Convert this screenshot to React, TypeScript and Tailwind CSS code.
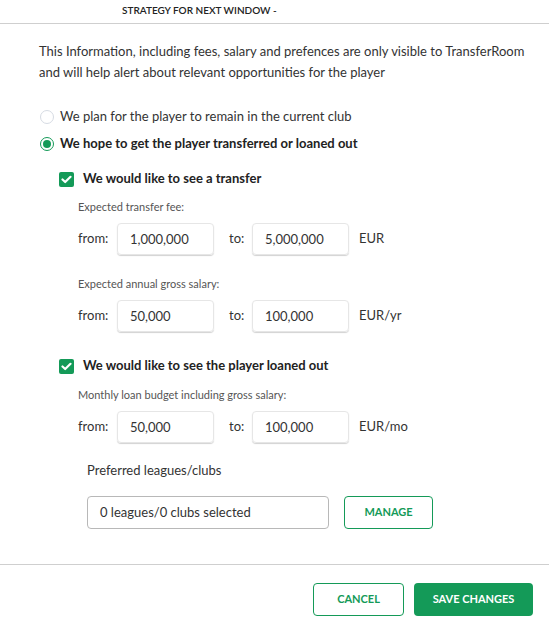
import React, { useState } from 'react';

const GREEN = '#149a58';

const Checkbox: React.FC<{ checked: boolean; onChange: () => void }> = ({ checked, onChange }) => (
    <button
        onClick={onChange}
        className={`w-[15px] h-[15px] rounded-[2px] flex items-center justify-center ${checked ? 'bg-[#149a58]' : 'border border-gray-300 bg-white'}`}
    >
        {checked && (
            <svg width="11" height="9" viewBox="0 0 11 9">
                <path d="M1.5 4.5 L4.2 7 L9.5 1.8" stroke="white" strokeWidth="2.2" fill="none" strokeLinecap="round" strokeLinejoin="round" />
            </svg>
        )}
    </button>
);

const Radio: React.FC<{ checked: boolean }> = ({ checked }) => (
    <span
        className={`w-[14px] h-[14px] rounded-full flex items-center justify-center bg-white ${checked ? 'border-[1.5px] border-[#149a58]' : 'border border-[#d6dbe3]'}`}
    >
        {checked && <span className="w-[8px] h-[8px] rounded-full bg-[#149a58]" />}
    </span>
);

const MoneyInput: React.FC<{ value: string }> = ({ value }) => (
    <input
        defaultValue={value}
        className="w-[97px] h-[32px] px-3 rounded-[4px] border border-[#e6e6e6] shadow-[0_1px_1px_rgba(0,0,0,0.18)] text-[13px] text-[#333] outline-none"
    />
);

const RangeRow: React.FC<{ label: string; from: string; to: string; unit: string }> = ({ label, from, to, unit }) => (
    <div className="flex flex-col">
        <div className="text-[11px] text-[#555] h-[16px] leading-[16px]">{label}</div>
        <div className="flex items-center mt-[8px] text-[13px] text-[#333]">
            <span className="w-[39px]">from:</span>
            <MoneyInput value={from} />
            <span className="ml-[15px] w-[23px]">to:</span>
            <MoneyInput value={to} />
            <span className="ml-[10px]">{unit}</span>
        </div>
    </div>
);

export default function App() {
    const [plan, setPlan] = useState<'stay' | 'move'>('move');
    const [transfer, setTransfer] = useState(true);
    const [loan, setLoan] = useState(true);

    return (
        <div className="w-[549px] h-[632px] bg-white text-[#333] font-['Lato','Noto_Sans',sans-serif] flex flex-col">
            <div className="h-[24px] border-b border-[#cfcfcf] pl-[122px] pt-[3px] text-[10px] font-semibold text-[#222]">
                STRATEGY FOR NEXT WINDOW -
            </div>

            <div className="pl-[39px] pr-[10px] pt-[17px] text-[13px] leading-[21px] text-[#333]">
                This Information, including fees, salary and prefences are only visible to TransferRoom and will help alert about relevant opportunities for the player
            </div>

            <div className="pl-[40px] mt-[26px] flex flex-col gap-[11px] text-[13px]">
                <label className="flex items-center gap-[6px] h-[16px] cursor-pointer" onClick={() => setPlan('stay')}>
                    <Radio checked={plan === 'stay'} />
                    <span className="text-[#333]">We plan for the player to remain in the current club</span>
                </label>
                <label className="flex items-center gap-[6px] h-[16px] cursor-pointer" onClick={() => setPlan('move')}>
                    <Radio checked={plan === 'move'} />
                    <span className="font-bold text-[#222]">We hope to get the player transferred or loaned out</span>
                </label>
            </div>

            <div className="pl-[59px] mt-[19px] flex items-center gap-[9px] h-[16px] text-[13px]">
                <Checkbox checked={transfer} onChange={() => setTransfer(!transfer)} />
                <span className="font-bold text-[#222]">We would like to see a transfer</span>
            </div>

            <div className="pl-[78px] mt-[12px] flex flex-col gap-[21px]">
                <RangeRow label="Expected transfer fee:" from="1,000,000" to="5,000,000" unit="EUR" />
                <RangeRow label="Expected annual gross salary:" from="50,000" to="100,000" unit="EUR/yr" />
            </div>

            <div className="pl-[59px] mt-[26px] flex items-center gap-[9px] h-[16px] text-[13px]">
                <Checkbox checked={loan} onChange={() => setLoan(!loan)} />
                <span className="font-bold text-[#222]">We would like to see the player loaned out</span>
            </div>

            <div className="pl-[78px] mt-[13px]">
                <RangeRow label="Monthly loan budget including gross salary:" from="50,000" to="100,000" unit="EUR/mo" />
            </div>

            <div className="pl-[87px] mt-[19px] text-[13px] text-[#333] h-[16px] leading-[16px]">Preferred leagues/clubs</div>
            <div className="pl-[87px] mt-[18px] flex items-center gap-[15px]">
                <div className="w-[242px] h-[33px] rounded-[4px] border border-[#b8b8b8] px-[12px] flex items-center text-[13px] text-[#333]">
                    0 leagues/0 clubs selected
                </div>
                <button className="w-[89px] h-[33px] rounded-[4px] border border-[#149a58] text-[11px] font-bold text-[#149a58]">
                    MANAGE
                </button>
            </div>

            <div className="mt-[35px] border-t border-[#cfcfcf]" />

            <div className="flex justify-end gap-[10px] pr-[16px] pt-[18px]">
                <button className="w-[91px] h-[33px] rounded-[4px] border border-[#149a58] text-[11px] font-bold text-[#149a58]">
                    CANCEL
                </button>
                <button className="w-[119px] h-[33px] rounded-[4px] text-[11px] font-bold text-white" style={{ backgroundColor: GREEN }}>
                    SAVE CHANGES
                </button>
            </div>
        </div>
    );
}
